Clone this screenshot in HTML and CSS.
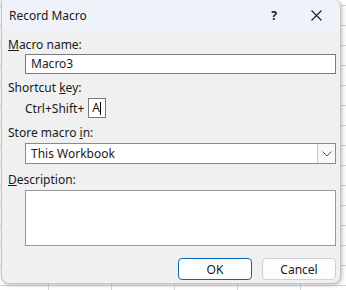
FILE: index.html
```html
<!DOCTYPE html>
<html lang="en">
<head>
    <meta charset="UTF-8">
    <title>Record Macro</title>
    <link rel="stylesheet" href="styles.css">
</head>
<body>
    <div class="dialog">
        <div class="titlebar">
            <span class="title">Record Macro</span>
            <span class="title-btn help">?</span>
            <span class="title-btn close">
                <svg width="11" height="11" viewBox="0 0 11 11"><path d="M0.5 0.5 L10.5 10.5 M10.5 0.5 L0.5 10.5" stroke="#1a1a1a" stroke-width="1.1" fill="none"/></svg>
            </span>
        </div>

        <div class="content">
            <div class="label"><u>M</u>acro name:</div>
            <div class="field text-field">Macro3</div>

            <div class="label label-gap"><span>Shortcut <u>k</u>ey:</span></div>
            <div class="shortcut-row">
                <span>Ctrl+Shift+</span>
                <div class="key-box">A<span class="caret"></span></div>
            </div>

            <div class="label label-gap2">Store macro <u>i</u>n:</div>
            <div class="field select-field">
                <span class="select-text">This Workbook</span>
                <span class="select-btn">
                    <svg width="10" height="6" viewBox="0 0 10 6"><path d="M0.5 0.5 L5 5 L9.5 0.5" stroke="#555" stroke-width="1" fill="none"/></svg>
                </span>
            </div>

            <div class="label label-gap3"><u>D</u>escription:</div>
            <div class="field textarea"></div>

            <div class="buttons">
                <button class="btn btn-default">OK</button>
                <button class="btn">Cancel</button>
            </div>
        </div>
    </div>
</body>
</html>
```

FILE: styles.css
```css
body {
    margin: 0;
    width: 346px;
    height: 290px;
    overflow: hidden;
    font-family: "Noto Sans", "Open Sans", sans-serif;
    font-size: 12px;
    color: #1a1a1a;
    background-color: #ffffff;
    background-image:
        linear-gradient(to right, #d4d4d4 1px, transparent 1px),
        linear-gradient(to bottom, #d4d4d4 1px, transparent 1px);
    background-size: 63px 20px;
    background-position: 48px 5px;
}

.dialog {
    margin-left: 1px;
    width: 338px;
    height: 283px;
    background: #f0f0f0;
    border: 1px solid #c4c4c4;
    border-top: none;
    border-radius: 0 8px 8px 8px;
    box-shadow: 1px 1px 4px rgba(0, 0, 0, 0.25);
    overflow: hidden;
}

/* Title bar */
.titlebar {
    display: flex;
    align-items: center;
    height: 31px;
    background: #eff3f9;
    padding-left: 7px;
}

.title {
    flex: 1;
    font-size: 12px;
    margin-top: -1px;
}

.title-btn {
    display: flex;
    align-items: center;
    justify-content: center;
    width: 46px;
    height: 31px;
}

.help {
    font-size: 12px;
    font-weight: bold;
    margin-top: -1px;
}

.close {
    width: 38px;
    margin-right: 5px;
    margin-top: -1px;
}

/* Form */
.content {
    padding: 6px 4px 0 6px;
}

.label {
    height: 16px;
    line-height: 16px;
}

.label-gap {
    margin-top: 6px;
}

.label-gap2 {
    margin-top: 7px;
}

.label-gap3 {
    margin-top: 8px;
}

.field {
    box-sizing: border-box;
    margin-left: 17px;
    background: #ffffff;
    border: 1px solid #7a7a7a;
}

.text-field {
    height: 20px;
    margin-top: 1px;
    line-height: 18px;
    padding-left: 5px;
}

.shortcut-row {
    display: flex;
    align-items: center;
    margin-top: 2px;
    margin-left: 17px;
    height: 20px;
}

.key-box {
    box-sizing: border-box;
    margin-left: 4px;
    width: 18px;
    height: 20px;
    border: 1px solid #7a7a7a;
    background: #ffffff;
    line-height: 18px;
    padding-left: 3px;
    display: flex;
    align-items: center;
}

.caret {
    display: inline-block;
    width: 1px;
    height: 13px;
    background: #000;
}

.select-field {
    display: flex;
    height: 21px;
    margin-top: 2px;
    line-height: 19px;
    border-color: #8a8a8a;
}

.select-text {
    flex: 1;
    padding-left: 5px;
}

.select-btn {
    display: flex;
    align-items: center;
    justify-content: center;
    width: 17px;
    border-left: 1px solid #c8c8c8;
    background: #f8f8f8;
}

.textarea {
    height: 56px;
    margin-top: 2px;
    border-color: #9a9a9a;
}

.buttons {
    display: flex;
    justify-content: flex-end;
    gap: 10px;
    margin-top: 12px;
}

.btn {
    width: 74px;
    height: 22px;
    font-family: inherit;
    font-size: 12px;
    color: #1a1a1a;
    background: #fdfdfd;
    border: 1px solid #d0d0d0;
    border-radius: 4px;
    padding: 0;
}

.btn-default {
    border-color: #0067c0;
}
```
